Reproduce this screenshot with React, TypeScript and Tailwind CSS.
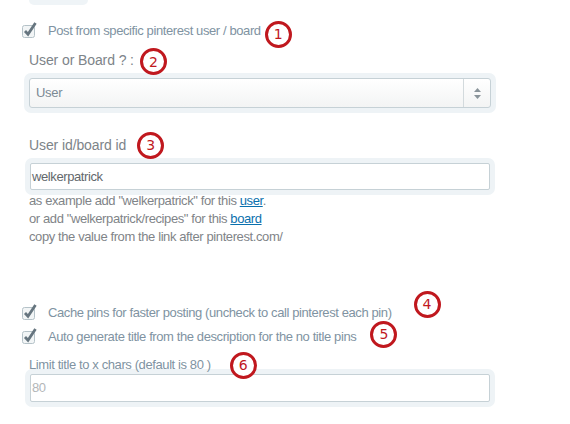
import type { ReactNode } from "react";

const FONT = "font-['Liberation_Sans',Arial,sans-serif]";

export default function App() {
  return (
    <div className={`relative h-[424px] w-[570px] overflow-hidden bg-white ${FONT}`}>
      <div className="ml-[29px] h-[5px] w-[59px] rounded-b-[6px] bg-[#eff4f7]" />

      <CheckRow className="mt-[13px] h-[26px]" label="Post from specific pinterest user / board">
        <Marker n="1" className="relative top-[3px] ml-[4px]" />
      </CheckRow>

      <div className="ml-[29px] mt-[4px] flex h-[25px] items-center">
        <span className="text-[14px] tracking-[-0.1px] text-[#7d8489]">User or Board ? :</span>
        <Marker n="2" className="relative top-[1px] ml-[6px]" />
      </div>

      <Well className="ml-[24px] h-[40px] w-[472px]">
        <div className="flex h-full rounded-[3px] border border-[#c6d1d6] bg-gradient-to-b from-white to-[#f3f4f4]">
          <span className="flex flex-1 items-center pl-[6px] text-[13px] tracking-[-0.3px] text-[#7b8994]">
            User
          </span>
          <span className="flex w-[27px] flex-col items-center justify-center gap-[3px] border-l border-[#d3dadd]">
            <svg width="7" height="4" viewBox="0 0 7 4">
              <path d="M0 4 L3.5 0 L7 4 Z" fill="#8a949a" />
            </svg>
            <svg width="7" height="4" viewBox="0 0 7 4">
              <path d="M0 0 L3.5 4 L7 0 Z" fill="#8a949a" />
            </svg>
          </span>
        </div>
      </Well>

      <div className="ml-[29px] mt-[19px] flex h-[26px] items-center">
        <span className="text-[14px] tracking-[-0.1px] text-[#7d8489]">User id/board id</span>
        <Marker n="3" className="ml-[11px]" />
      </div>

      <Well className="ml-[25px] h-[37px] w-[470px]">
        <div className="flex h-full items-center rounded-[2px] border border-[#c6d1d6] bg-white pl-[1px] text-[13px] tracking-[-0.4px] text-[#63686c]">
          welkerpatrick
        </div>
      </Well>

      <div className="-mt-[3px] ml-[29px] text-[13px] leading-[18px] tracking-[-0.4px] text-[#7f8488]">
        <p>
          as example add "welkerpatrick" for this{" "}
          <a className="text-[#0a70ad] underline">user</a>.
        </p>
        <p>
          or add "welkerpatrick/recipes" for this{" "}
          <a className="text-[#0a70ad] underline">board</a>
        </p>
        <p>copy the value from the link after pinterest.com/</p>
      </div>

      <CheckRow className="mt-[55px] h-[24px]" label="Cache pins for faster posting (uncheck to call pinterest each pin)">
        <Marker n="4" className="relative -top-[9px] ml-[22px]" />
      </CheckRow>

      <CheckRow className="h-[24px]" label="Auto generate title from the description for the no title pins">
        <Marker n="5" className="relative -top-[3px] ml-[14px]" />
      </CheckRow>

      <div className="ml-[29px] mt-[2px] flex h-[18px] items-center">
        <span className="relative top-[5px] text-[13px] tracking-[-0.4px] text-[#8093a2]">
          Limit title to x chars (default is 80 )
        </span>
        <Marker n="6" className="relative top-[5px] ml-[19px]" />
      </div>

      <Well className="ml-[25px] h-[38px] w-[470px]">
        <div className="flex h-full items-center rounded-[2px] border border-[#c6d1d6] bg-white pl-[1px] text-[13px] tracking-[-0.4px] text-[#b3b6b8]">
          80
        </div>
      </Well>
    </div>
  );
}

function Well({ className, children }: { className: string; children: ReactNode }) {
  return <div className={`rounded-[7px] bg-[#eef3f6] p-[5px] ${className}`}>{children}</div>;
}

interface CheckRowProps {
  label: string;
  className: string;
  children?: ReactNode;
}

function CheckRow({ label, className, children }: CheckRowProps) {
  return (
    <div className={`ml-[21px] flex items-center ${className}`}>
      <svg width="18" height="18" viewBox="0 0 18 18" className="relative -top-[1px] shrink-0">
        <rect x="1.5" y="4.5" width="12" height="12" rx="2" fill="#f2f5f6" stroke="#b5c2c8" />
        <path d="M4 10 L7 13.2 L14.5 2" fill="none" stroke="#66757f" strokeWidth="2.8" />
      </svg>
      <span className="ml-[9px] whitespace-nowrap text-[13px] tracking-[-0.4px] text-[#8093a2]">{label}</span>
      {children}
    </div>
  );
}

function Marker({ n, className }: { n: string; className?: string }) {
  return (
    <span
      className={`flex h-[27px] w-[27px] shrink-0 items-center justify-center rounded-full border-[3px] border-[#c0181e] bg-white font-['DejaVu_Sans',sans-serif] text-[14px] leading-none text-[#c0181e] ${className ?? ""}`}
    >
      {n}
    </span>
  );
}
